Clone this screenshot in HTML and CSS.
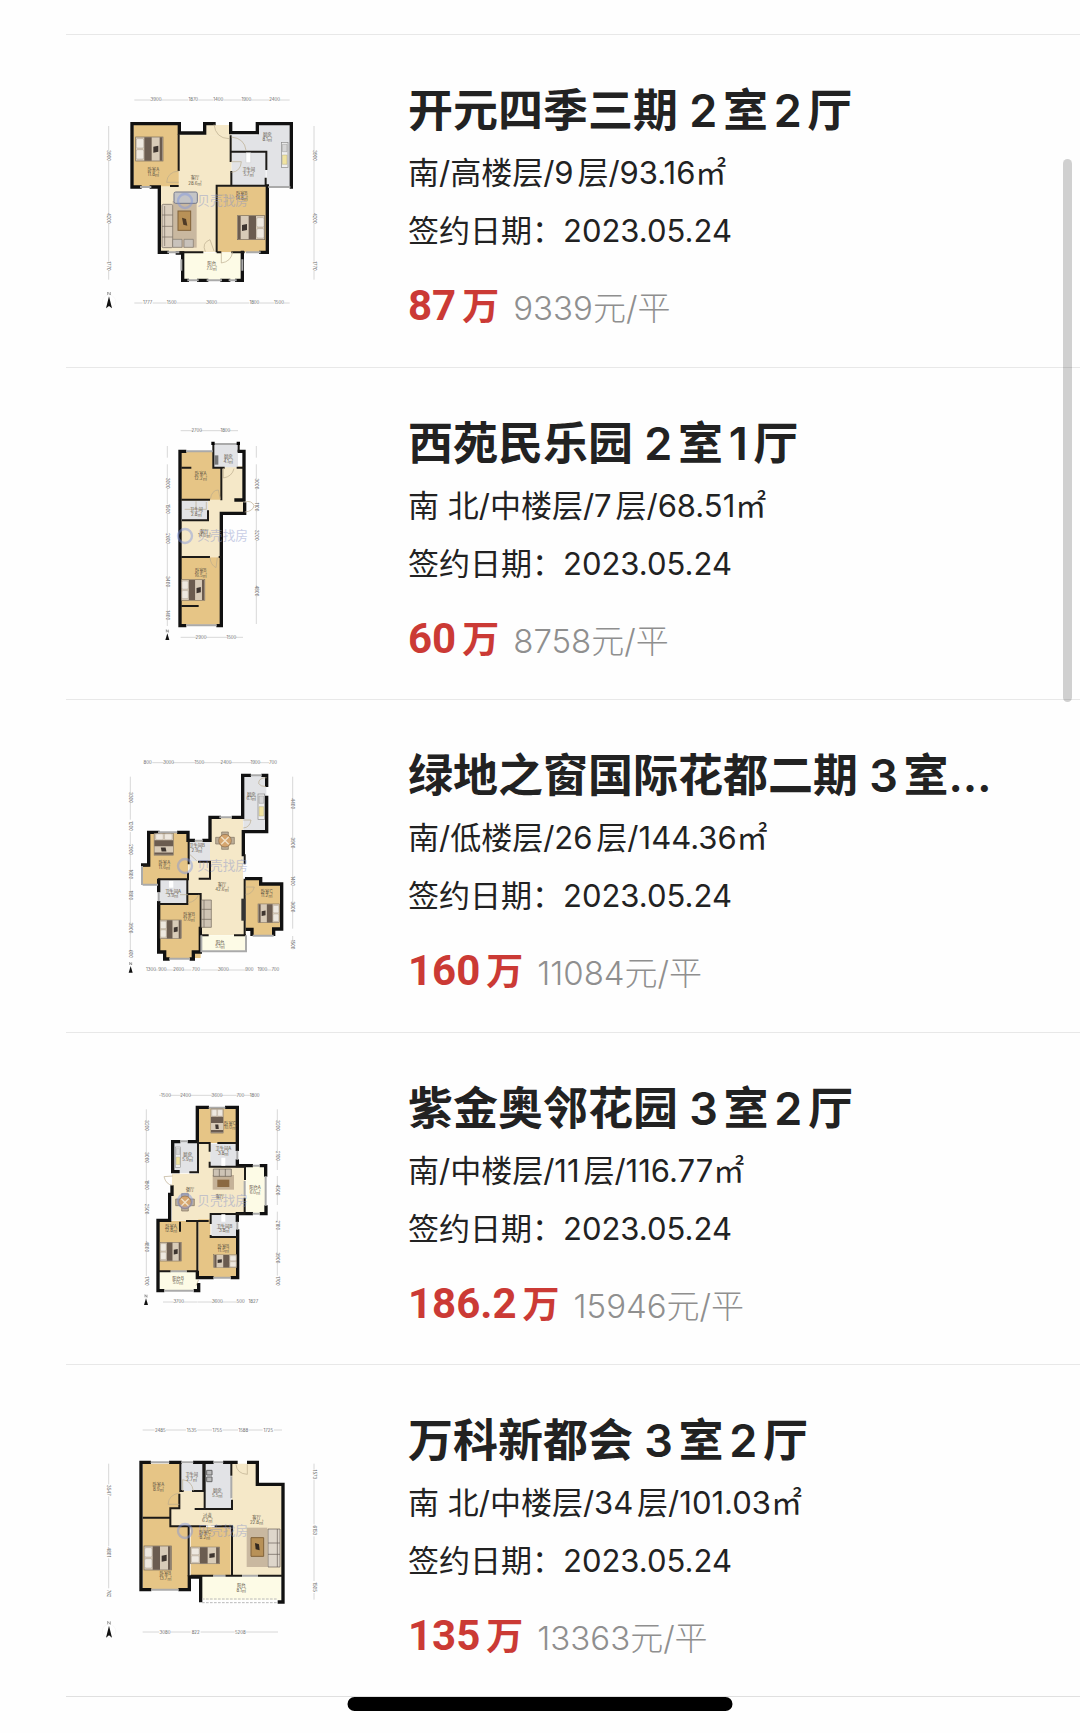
FILE: index.html
```html
<!DOCTYPE html>
<html lang="zh-CN">
<head>
    <meta charset="UTF-8">
    <meta name="viewport" content="width=device-width, initial-scale=1.0">
    <title>成交记录</title>
    <link rel="stylesheet" href="styles.css">
</head>
<body>
    <!-- Piezas comunes de los planos -->
    <svg class="defs" aria-hidden="true">
        <defs>
            <g id="bed">
                <rect width="82" height="72" fill="#d8cbb8" stroke="#75695a" stroke-width="2"/>
                <rect x="2" y="5" width="22" height="28" rx="4" fill="#eee8df" stroke="#8c8173"/>
                <rect x="2" y="38" width="22" height="28" rx="4" fill="#eee8df" stroke="#8c8173"/>
                <path d="M26 1h22v70H26zM72 1h8v70h-8z" fill="#6b5c50"/>
                <path d="M53 29l15-3v18l-15 3z" fill="#3e3530"/>
            </g>
            <g id="sofa">
                <rect x="32" y="20" width="72" height="140" fill="#c9b8a0"/>
                <rect width="32" height="130" y="30" rx="4" fill="#d9cdbd" stroke="#6d6259" stroke-width="2"/>
                <path d="M0 62h32M0 96h32M0 128h32M8 35v120" stroke="#75695f" stroke-width="2"/>
                <rect x="48" y="50" width="38" height="58" fill="#b89157" stroke="#80623a" stroke-width="3"/>
                <path d="M60 70l12 4 4 20-12-3z" fill="#4e3b26"/>
            </g>
            <g id="north">
                <circle r="20" fill="#fff" stroke="#eee"/>
                <path d="M0-16l9 36-9-7-9 7z" fill="#111"/>
                <path d="M-4-20v-9l8 9v-9" fill="none" stroke="#777" stroke-width="2"/>
            </g>
            <g id="arrow">
                <path d="M0-9l6 20H-6z" fill="#111"/>
                <path d="M-3-12v-8l6 8v-8" fill="none" stroke="#777" stroke-width="2"/>
            </g>
            <g id="stove">
                <rect width="20" height="76" fill="#eee" stroke="#888" stroke-width="2"/>
                <path d="M3 6h14v22H3z" fill="#d6d6d6" stroke="#777"/>
                <path d="M3 38h14v28H3z" fill="#f0e3a0" stroke="#9a9470"/>
            </g>
            <g id="table">
                <path d="M-10-26h20v52h-20zM-28-10h56v20h-56z" fill="#bcae98" stroke="#7f715f" stroke-width="2"/>
                <circle r="19" fill="#d5a56e" stroke="#85684a" stroke-width="2"/>
                <path d="M-11-11l22 22M11-11l-22 22" stroke="#f0e1c7" stroke-width="4"/>
            </g>
            <g id="mark">
                <circle cx="285" cy="360" r="21"/>
                <text x="322" y="373">贝壳找房</text>
            </g>
        </defs>
    </svg>

    <main class="deal-list">
        <article class="deal">
            <svg class="plan" viewBox="0 0 750 720" role="img" aria-label="户型图">
                <path class="floor" d="M208 163h217v350H208z"/>
                <path class="floor" d="M268 160h76v-28h78v32H268z"/>
                <path class="wood" d="M130 132h136v184H130zM382 316h148v198H382z"/>
                <path class="tile" d="M425 163h78v-31h100v184h-73V210H425zM425 214h102v100H425z"/>
                <path class="balcony" d="M278 515h180v84H278z"/>
                <path class="wall" d="M126 318V128h142v28h76v-28h28M422 128v27h80v-27h102v190M130 318h20M184 318h24v196h24M262 516h16v82h14M326 598h24M396 598h20M440 598h17v-84M512 514h20V315"/>
                <path class="partition" d="M266 160v110M240 315h26M422 163v80M424 212h105v55M424 270v44M380 514V314h152M380 514h14M424 514h40M268 514h72M527 290v26"/>
                <path class="window" d="M150 318h34M535 318h66M232 514h36M468 514h44M292 598h34M350 598h46M416 598h24M274 535v34M457 535v34"/>
                <path class="door" d="M372 130q5 42 45 43M424 168q40 4 44 40M424 242h30q-2 30-30 32M266 270q-34 3-36 34h36M346 512q-12-26 14-36l12 34M394 512v34q30-4 34-34M384 342h28v34"/>
                <use href="#bed" x="137" y="168"/>
                <use href="#bed" transform="translate(524 476) rotate(180)"/>
                <use href="#sofa" x="216" y="340"/>
                <rect x="252" y="333" width="70" height="34" rx="5" fill="#c4c4c6" stroke="#73778a" stroke-width="3"/>
                <path d="M248 475h28v24h-28zM282 475h28v24h-28z" fill="#c8c2bb" stroke="#81776d" stroke-width="2"/>
                <use href="#stove" x="574" y="184"/>
                <path d="M468 215h14v30h-14z" fill="#fff" stroke="#bbb"/>
                <g class="room"><text x="190" y="270">卧室A</text><text x="190" y="285">11.8㎡</text><text x="315" y="294">客厅</text><text x="315" y="311">28.6㎡</text><text x="532" y="164">厨房</text><text x="532" y="179">8.1㎡</text><text x="476" y="271">卫生间</text><text x="476" y="286">5.7㎡</text><text x="455" y="342">卧室B</text><text x="455" y="358">14.8㎡</text><text x="365" y="552">阳台</text><text x="365" y="567">7.0㎡</text></g>
                <use class="mark" href="#mark"/>
                <path class="dim" d="M133 57h50M213 57h82M325 57h45M400 57h55M483 57h56M569 57h30M133 666h25M188 666h42M260 666h90M380 666h98M508 666h44M582 666h17M56 135v74M56 239v158M56 427v115M56 568v28M672 135v74M672 239v158M672 427v115M672 568v28"/>
                <g class="size"><text x="198" y="61">3900</text><text x="310" y="61">1870</text><text x="385" y="61">1400</text><text x="469" y="61">1900</text><text x="554" y="61">2400</text><text x="173" y="670">1777</text><text x="245" y="670">1500</text><text x="365" y="670">3600</text><text x="493" y="670">1800</text><text x="567" y="670">1500</text></g>
                <g class="size"><text transform="translate(52 224) rotate(90)">3900</text><text transform="translate(52 412) rotate(90)">4200</text><text transform="translate(52 555) rotate(90)">1770</text><text transform="translate(668 224) rotate(90)">3900</text><text transform="translate(668 412) rotate(90)">4200</text><text transform="translate(668 555) rotate(90)">1770</text></g>
                <use href="#north" x="57" y="662"/>
            </svg>
            <div class="deal-info">
                <h2>开元四季三期 2室2厅</h2>
                <p>南/高楼层/9层/93.16㎡</p>
                <p>签约日期：2023.05.24</p>
                <div class="price"><strong>87<span>万</span></strong><em>9339元/平</em></div>
            </div>
        </article>

        <article class="deal">
            <svg class="plan" viewBox="0 -6 750 720" role="img" aria-label="户型图">
                <path class="floor" d="M272 150h190v142h-68v132H272z"/>
                <path class="wood" d="M272 107h98v48h22v96H272zM272 424h122v202H272z"/>
                <path class="tile" d="M370 86h74v68h-74zM272 255h82v58h-82z"/>
                <path class="wall" d="M284 106h-14v523h14M384 629h10V292h70v-28M448 106h14v146h-24"/>
                <path class="partition" d="M274 155h30M370 82v73h24v98M446 82v26M374 155h30M440 155h22M274 251h86M276 313h78v-30M274 423h86M386 423h8M274 570h52"/>
                <path class="window" d="M288 106h80M374 84h68M288 628h92"/>
                <path class="door" d="M361 250q4-28 24-28l6 28M400 156v30q26-4 32-28M464 258q20-6 28 10-2 18-28 20M360 425q2 22 18 30l4-30M284 280h34v-24M325 280h24v-22"/>
                <path d="M364 77h10v10h-10zM440 77h10v10h-10z"/>
                <g transform="translate(274 491) scale(.86)"><use href="#bed"/></g>
                <path d="M373 118h12v28h-12z" fill="#777"/>
                <g class="room"><text x="332" y="178">卧室A</text><text x="332" y="192">12.2㎡</text><text x="415" y="126">厨房</text><text x="415" y="140">4.1㎡</text><text x="319" y="286">卫生间</text><text x="319" y="299">2.8㎡</text><text x="343" y="350">客厅</text><text x="343" y="364">14.0㎡</text><text x="332" y="468">卧室B</text><text x="332" y="482">16.5㎡</text></g>
                <use class="mark" href="#mark"/>
                <path class="dim" d="M272 44h36M332 44h62M418 44h26M272 664h46M348 664h64M437 664h22M232 90v35M232 145v45M232 215v50M232 293v62M232 382v105M232 507v78M232 610v20M499 90v35M499 145v45M499 218v45M499 283v62M499 372v140M499 538v86"/>
                <g class="size"><text x="320" y="48">2700</text><text x="406" y="48">1800</text><text x="333" y="668">2900</text><text x="424" y="668">1500</text></g>
                <g class="size"><text transform="translate(228 202) rotate(90)">3000</text><text transform="translate(228 279) rotate(90)">1500</text><text transform="translate(228 368) rotate(90)">2600</text><text transform="translate(228 497) rotate(90)">3400</text><text transform="translate(228 598) rotate(90)">1400</text><text transform="translate(495 204) rotate(90)">3000</text><text transform="translate(495 273) rotate(90)">1100</text><text transform="translate(495 358) rotate(90)">3200</text><text transform="translate(495 525) rotate(90)">4800</text></g>
                <use href="#arrow" x="232" y="661"/>
            </svg>
            <div class="deal-info">
                <h2>西苑民乐园 2室1厅</h2>
                <p>南 北/中楼层/7层/68.51㎡</p>
                <p>签约日期：2023.05.24</p>
                <div class="price"><strong>60<span>万</span></strong><em>8758元/平</em></div>
            </div>
        </article>

        <article class="deal">
            <svg class="plan" viewBox="0 0 750 720" role="img" aria-label="户型图">
                <path class="floor" d="M296 285h65v-70h98v185h8v167H332V445h-37z"/>
                <path class="wood" d="M178 260h116v140h-90v16h-46v-60h20zM207 474h84v-30h41v192H226v-18h-19zM467 400h45v16h63v132h-24v22h-63v-20h-21z"/>
                <path class="tile" d="M460 90h69v166h-69zM296 288h64v58h-64zM207 402h84v71h-84z"/>
                <path class="balcony" d="M334 568h132v46H334z"/>
                <path class="wall" d="M204 259h-28v98h-18M266 259h28v24h16M342 283h18v-69h28M430 214h28V88h20M519 88h11v30M530 154v103h-70v69M206 403v31M206 470v148h18v21h10M304 639h6v-21h21v-71M470 398h42v16h63v135h-24v16M472 550h14v15"/>
                <path class="partition" d="M296 283v72M324 347h36v51h-34M294 380v20h-90M292 402v44M206 474h86v-30h40v110M464 325v30M464 398v170M332 568h24M432 568h36M158 358h18"/>
                <path class="window" d="M204 259h58M314 284h24M388 214h38M482 88h33M156 360v57M158 416h46M206 438v28M238 638h62M488 569h63M334 568v48h134v-48"/>
                <path class="door" d="M530 95q-25 0-24 18 5 8 22 9M460 246q20-2 23-24h-23M467 445q20 0 26-22h-26M294 470q22-2 32-24M300 326l20 18M270 446h24"/>
                <g transform="translate(250 262) rotate(90) scale(.8)"><use href="#bed"/></g>
                <g transform="translate(210 522) scale(.78)"><use href="#bed"/></g>
                <g transform="translate(568 530) rotate(180) scale(.78)"><use href="#bed"/></g>
                <use href="#table" x="405" y="284"/>
                <use href="#stove" x="504" y="144"/>
                <path d="M334 462h30v82h-30zM334 490h30M334 520h30M342 462v82" fill="#cfc4b4" stroke="#6f665b" stroke-width="2"/>
                <path d="M454 458h12v66h-12z" fill="#333"/>
                <path d="M237 405h13v20h-13z" fill="#fff"/>
                <g class="room"><text x="223" y="354">卧室A</text><text x="223" y="368">11.6㎡</text><text x="321" y="304">卫生间B</text><text x="321" y="317">2.9㎡</text><text x="484" y="150">厨房</text><text x="484" y="163">6.1㎡</text><text x="249" y="440">卫生间A</text><text x="249" y="453">3.9㎡</text><text x="396" y="420">客厅</text><text x="396" y="434">42.6㎡</text><text x="297" y="510">卧室B</text><text x="297" y="524">17.6㎡</text><text x="530" y="440">卧室C</text><text x="530" y="454">11.2㎡</text><text x="390" y="593">阳台</text><text x="390" y="606">5.1㎡</text></g>
                <use class="mark" href="#mark"/>
                <path class="dim" d="M187 50h36M249 50h66M341 50h54M421 50h62M509 50h28M195 672h8M228 672h25M279 672h25M332 672h55M413 672h55M530 672h14M121 92v52M121 166v55M121 258v42M121 322v50M121 398v38M121 460v75M121 557v58M608 92v70M608 184v95M608 303v90M608 418v55M608 493v55M608 570v15"/>
                <g class="size"><text x="173" y="54">800</text><text x="236" y="54">3000</text><text x="328" y="54">1500</text><text x="408" y="54">2400</text><text x="496" y="54">1900</text><text x="549" y="54">700</text><text x="183" y="676">1300</text><text x="217" y="676">900</text><text x="266" y="676">2600</text><text x="318" y="676">700</text><text x="400" y="676">3600</text><text x="478" y="676">900</text><text x="517" y="676">1900</text><text x="556" y="676">700</text></g>
                <g class="size"><text transform="translate(117 155) rotate(90)">3300</text><text transform="translate(117 240) rotate(90)">1200</text><text transform="translate(117 311) rotate(90)">2900</text><text transform="translate(117 385) rotate(90)">1600</text><text transform="translate(117 448) rotate(90)">1800</text><text transform="translate(117 546) rotate(90)">3900</text><text transform="translate(117 624) rotate(90)">600</text><text transform="translate(604 173) rotate(90)">4400</text><text transform="translate(604 291) rotate(90)">3900</text><text transform="translate(604 405) rotate(90)">1400</text><text transform="translate(604 483) rotate(90)">3600</text><text transform="translate(604 596) rotate(90)">1500</text></g>
                <use href="#arrow" x="122" y="669"/>
            </svg>
            <div class="deal-info">
                <h2 title="绿地之窗国际花都二期 3室2厅">绿地之窗国际花都二期 3室…</h2>
                <p>南/低楼层/26层/144.36㎡</p>
                <p>签约日期：2023.05.24</p>
                <div class="price"><strong>160<span>万</span></strong><em>11084元/平</em></div>
            </div>
        </article>

        <article class="deal">
            <svg class="plan" viewBox="0 -6 750 720" role="img" aria-label="户型图">
                <path class="floor" d="M325 185h37v72h104v142H362v20H246V278h79z"/>
                <path class="wood" d="M325 80h114v106H325zM207 420h116v151H207zM325 415h36v54h82v120H325z"/>
                <path class="tile" d="M250 184h73v92h-73zM361 188h80v67h-80zM364 399h78v69h-78z"/>
                <path class="balcony" d="M469 256h58v142h-58zM208 573h116v54H208z"/>
                <path class="wall" d="M352 79h-30v103h-24M266 182h-18v90h16M410 79h32v126M442 240v14h42M514 254h13v28M528 378v20h-14M484 398h-42v20M443 450v140h-16M366 590h-44v-16M246 318v22h-7v78h-35v211h14M316 629h10v-18"/>
                <path class="partition" d="M324 180v94h-26M325 186h34v26M359 242v15h106v40M382 186h58M464 350v49H362v30M288 420h34v150M322 420h34M362 462v6h80M270 422v30M206 571h36M290 571h34"/>
                <path class="window" d="M356 80h50M270 181h24M442 209v27M488 254h22M527 286v88M488 398h22M442 422v24M370 590h53M222 629h90M242 571h48M464 300v46"/>
                <path class="door" d="M248 285l-26 2q6 24 26 26M326 596l-8 18"/>
                <g transform="translate(400 84) rotate(90) scale(.88 .52)"><use href="#bed"/></g>
                <g transform="translate(210 484) scale(.78)"><use href="#bed"/></g>
                <g transform="translate(440 560) rotate(180) scale(.84 .54)"><use href="#bed"/></g>
                <use href="#table" x="285" y="364"/>
                <g transform="translate(256 198) scale(.8)"><use href="#stove"/></g>
                <path d="M368 282h64v44h-64z" fill="#c5b298"/>
                <path d="M370 264h54v22h-54zM388 264v22M406 264v22" fill="#cdc3b5" stroke="#665d53" stroke-width="2"/>
                <path d="M382 296h36v22h-36z" fill="#8b6942"/>
                <path d="M394 230h12v24h-12zM394 400h12v22h-12z" fill="#fff"/>
                <g class="room"><text x="420" y="132">卧室C</text><text x="420" y="145">10.0㎡</text><text x="293" y="226">厨房</text><text x="293" y="240">5.9㎡</text><text x="400" y="208">卫生间A</text><text x="400" y="221">3.8㎡</text><text x="300" y="330">餐厅</text><text x="390" y="352">客厅</text><text x="495" y="325">阳台A</text><text x="495" y="338">6.0㎡</text><text x="243" y="441">卧室A</text><text x="243" y="454">12.8㎡</text><text x="403" y="441">卫生间B</text><text x="403" y="454">3.8㎡</text><text x="400" y="500">卧室B</text><text x="400" y="514">11.5㎡</text><text x="264" y="597">阳台B</text><text x="264" y="610">5.0㎡</text></g>
                <use class="mark" href="#mark"/>
                <path class="dim" d="M207 43h8M241 43h33M300 43h68M394 43h46M462 43h22M219 663h32M281 663h42M324 663h44M396 663h44M169 85v38M169 145v75M169 240v60M169 324v50M169 394v90M169 510v75M562 85v38M562 145v70M562 235v32M562 285v32M562 337v35M562 392v30M562 445v75M562 542v42"/>
                <g class="size"><text x="228" y="47">1500</text><text x="287" y="47">2400</text><text x="381" y="47">3600</text><text x="451" y="47">700</text><text x="494" y="47">1800</text><text x="266" y="667">3700</text><text x="382" y="667">3600</text><text x="452" y="667">500</text><text x="490" y="667">1827</text></g>
                <g class="size"><text transform="translate(165 134) rotate(90)">3200</text><text transform="translate(165 230) rotate(90)">3000</text><text transform="translate(165 312) rotate(90)">1900</text><text transform="translate(165 384) rotate(90)">2500</text><text transform="translate(165 497) rotate(90)">4800</text><text transform="translate(165 600) rotate(90)">1700</text><text transform="translate(558 134) rotate(90)">3200</text><text transform="translate(558 225) rotate(90)">2100</text><text transform="translate(558 327) rotate(90)">4500</text><text transform="translate(558 433) rotate(90)">2100</text><text transform="translate(558 531) rotate(90)">3900</text><text transform="translate(558 600) rotate(90)">1700</text></g>
                <use href="#arrow" x="168" y="661"/>
            </svg>
            <div class="deal-info">
                <h2>紫金奥邻花园 3室2厅</h2>
                <p>南/中楼层/11层/116.77㎡</p>
                <p>签约日期：2023.05.24</p>
                <div class="price"><strong>186.2<span>万</span></strong><em>15946元/平</em></div>
            </div>
        </article>

        <article class="deal">
            <svg class="plan" viewBox="0 0 750 720" role="img" aria-label="户型图">
                <path class="floor" d="M242 240h100v54h84V158h74v64h76v272H427V346H242z"/>
                <path class="wood" d="M158 158h112v136h-28v52h52v190H158zM302 348h120v146H302z"/>
                <path class="tile" d="M271 158h68v82h-68zM345 158h78v135h-78z"/>
                <path class="balcony" d="M336 497h238v70H336z"/>
                <path class="wall" d="M178 154h-25v382h26M242 154h28M314 154h52M404 154h34M476 154h26v66h77v353h-11M270 536h28v-38h34v71"/>
                <path class="partition" d="M271 156v84h10M306 240h34V156M344 158v136h82v-28M424 158v36M268 248v44h-27v54h58M158 320h84M314 294h112M374 346h52v148M348 346h-52v150M302 494h68M406 494h50M504 494h74"/>
                <path class="window" d="M182 154h56M274 154h36M370 154h30M184 536h82M370 494h36M456 494h48M424 196v66"/>
                <path class="dash" d="M336 564h228M336 575h228"/>
                <path class="door" d="M438 160q2 28 34 30v-30M270 246q-34 4-36 34h34M278 240v-34q28 4 32 34M346 350q20 0 28 20M410 348v26"/>
                <use href="#bed" x="162" y="405"/>
                <g transform="translate(302 408) scale(1.06 .7)"><use href="#bed"/></g>
                <path d="M470 350h62v118h-62z" fill="#c9b8a0"/>
                <path d="M534 354h36v114h-36zM534 396h36M534 430h36M562 354v114" fill="#ded6cb" stroke="#655c54" stroke-width="2"/>
                <path d="M483 380h38v56h-38z" fill="#b89157" stroke="#80623a" stroke-width="3"/>
                <path d="M495 396l12 4 2 18-12-3z" fill="#33291f"/>
                <path d="M350 178h16v14h-16zM350 198h16v14h-16z" fill="#bbb" stroke="#666" stroke-width="3"/>
                <g class="room"><text x="205" y="224">卧室A</text><text x="205" y="239">8.9㎡</text><text x="305" y="195">卫生间</text><text x="305" y="210">2.7㎡</text><text x="382" y="243">厨房</text><text x="382" y="258">5.5㎡</text><text x="352" y="318">过道</text><text x="352" y="333">6.2㎡</text><text x="500" y="324">客厅</text><text x="500" y="339">22.8㎡</text><text x="345" y="370">卧室C</text><text x="345" y="385">8.2㎡</text><text x="226" y="492">卧室B</text><text x="226" y="506">13.7㎡</text><text x="454" y="529">阳台</text><text x="454" y="544">8.1㎡</text></g>
                <use class="mark" href="#mark"/>
                <path class="dim" d="M158 57h36M228 57h60M322 57h44M398 57h46M476 57h42M552 57h24M158 663h50M242 663h60M332 663h102M468 663h96M56 158v62M56 256v150M56 442v90M672 158v18M672 206v134M672 376v134M672 546v20"/>
                <g class="size"><text x="211" y="62">2485</text><text x="305" y="62">1535</text><text x="382" y="62">1755</text><text x="460" y="62">1588</text><text x="535" y="62">1725</text><text x="225" y="668">3080</text><text x="317" y="668">822</text><text x="451" y="668">5208</text></g>
                <g class="size"><text transform="translate(52 238) rotate(90)">3547</text><text transform="translate(52 424) rotate(90)">4801</text><text transform="translate(52 548) rotate(90)">762</text><text transform="translate(668 190) rotate(90)">1573</text><text transform="translate(668 358) rotate(90)">6153</text><text transform="translate(668 528) rotate(90)">1505</text></g>
                <use href="#north" x="57" y="660"/>
            </svg>
            <div class="deal-info">
                <h2>万科新都会 3室2厅</h2>
                <p>南 北/中楼层/34层/101.03㎡</p>
                <p>签约日期：2023.05.24</p>
                <div class="price"><strong>135<span>万</span></strong><em>13363元/平</em></div>
            </div>
        </article>
    </main>

    <div class="scroll-thumb"></div>
    <div class="home-bar"></div>
</body>
</html>
```

FILE: styles.css
```css
* {
    box-sizing: border-box;
}
body {
    font-family: Inter, "Noto Sans CJK SC", sans-serif;
    margin: 0;
    color: #222;
    background-color: #fefefe;
}
.defs {
    display: none;
}
.deal-list {
    min-height: 100vh;
    padding: 34px 0 36px 66px;
    display: grid;
    grid-template-columns: minmax(0, 1fr);
    grid-auto-rows: 1fr;
}
.deal {
    display: flex;
    gap: 68px;
    padding: 46px 66px 24px 24px;
    border-top: 1px solid #e8e8e8;
}
.deal:last-child {
    border-bottom: 1px solid #e0e0e0;
}
.plan {
    flex: none;
    width: 250px;
    height: 240px;
}
.deal-info {
    flex: 1;
    min-width: 0;
}
h2, p {
    text-autospace: normal;
}
h2 {
    margin: 0 0 3px;
    font-size: 45px;
    font-weight: 600;
    line-height: 60px;
    white-space: nowrap;
    overflow: hidden;
    text-overflow: ellipsis;
}
p {
    margin: 0;
    font-size: 31px;
    line-height: 58px;
}
.price {
    display: flex;
    align-items: baseline;
    gap: 14px;
    margin-top: 16px;
    line-height: 60px;
}
.price strong {
    color: #cb3a35;
    font-family: Roboto, "Noto Sans CJK SC", sans-serif;
    font-size: 42px;
    font-weight: 700;
}
.price span {
    margin-left: 6px;
    font-size: 37px;
}
.price em {
    color: #8f8f8f;
    font-size: 33px;
    font-style: normal;
    font-weight: 300;
}

/* planos */
.floor {
    fill: #f5e8c8;
}
.wood {
    fill: #e6c586;
}
.tile {
    fill: #e2e3e6;
}
.balcony {
    fill: #fdfbe6;
}
.wall, .partition, .window, .door, .dim, .dash {
    fill: none;
}
.wall {
    stroke: #111;
    stroke-width: 10;
    stroke-linecap: square;
}
.partition {
    stroke: #1c1a17;
    stroke-width: 6;
}
.window {
    stroke: #aaa;
    stroke-width: 6;
}
.door {
    stroke: #b9ab8c;
    stroke-width: 2;
}
.dash {
    stroke: #bbb;
    stroke-width: 3;
    stroke-dasharray: 8 4;
}
.dim {
    stroke: #c4c4c4;
    stroke-width: 2;
}
.size, .room {
    font-size: 13px;
    text-anchor: middle;
}
.size {
    fill: #666;
}
.room {
    fill: #5c5344;
}
.mark {
    fill: #8793c8;
    font-size: 38px;
    opacity: 0.45;
}
#mark circle {
    fill: none;
    stroke: #7f95e0;
    stroke-width: 7;
}

.scroll-thumb {
    position: fixed;
    top: 159px;
    right: 8px;
    width: 9px;
    height: 543px;
    border-radius: 5px;
    background-color: rgba(0,0,0,0.18);
}
.home-bar {
    position: fixed;
    bottom: 22px;
    left: 50%;
    width: 385px;
    height: 14px;
    border-radius: 7px;
    background-color: #000;
    transform: translateX(-50%);
}
```
